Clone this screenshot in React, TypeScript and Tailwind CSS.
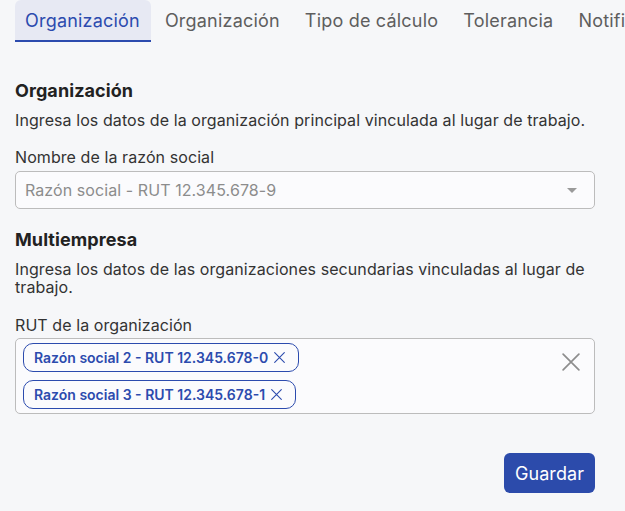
import { useState } from 'react';

type Chip = { id: string; label: string };

const TABS = ['Organización', 'Organización', 'Tipo de cálculo', 'Tolerancia', 'Notificaciones'];

function XIcon({ className }: { className?: string }) {
  return (
    <svg viewBox="0 0 16 16" className={className} fill="none" stroke="currentColor" strokeLinecap="round">
      <path d="M1 1l14 14M15 1L1 15" />
    </svg>
  );
}

export default function App() {
  const [active, setActive] = useState(0);
  const [chips, setChips] = useState<Chip[]>([
    { id: '2', label: 'Razón social 2 - RUT 12.345.678-0' },
    { id: '3', label: 'Razón social 3 - RUT 12.345.678-1' },
  ]);

  return (
    <main className="min-h-screen w-[625px] overflow-hidden bg-[#f6f7f9] font-['Inter',sans-serif] text-[#333]">
      <nav className="flex h-[42px] gap-1 overflow-hidden whitespace-nowrap pl-[15px]">
        {TABS.map((t, i) => (
          <button
            key={i}
            onClick={() => setActive(i)}
            className={
              i === active
                ? 'h-[42px] shrink-0 rounded-t-[6px] border-b-2 border-[#2c4bae] bg-[#e7e9f3] pl-[10px] pr-[11px] pt-[1px] text-[18px] leading-[22px] tracking-[0.2px] text-[#2c4bae]'
                : 'h-[42px] shrink-0 border-b-2 border-transparent pl-[10px] pr-[11px] pt-[1px] text-[18px] leading-[22px] tracking-[0.2px] text-[#5e5e5e]'
            }
          >
            {t}
          </button>
        ))}
      </nav>

      <section className="w-[595px] pl-[15px] tracking-[0.08px]">
        <h2 className="mt-[38px] text-[18px] font-bold leading-[22px] text-[#222]">Organización</h2>
        <p className="mt-[9px] text-[16px] leading-[18px]">
          Ingresa los datos de la organización principal vinculada al lugar de trabajo.
        </p>
        <label className="mt-[18px] block text-[16px] leading-[20px]">Nombre de la razón social</label>
        <div className="mt-1 flex h-[38px] items-center justify-between rounded-[5px] border border-[#bcbcbc] bg-[#fbfbfd] pl-[9px] pr-[17px]">
          <span className="text-[16px] leading-[20px] text-[#8c8c8c]">Razón social - RUT 12.345.678-9</span>
          <svg viewBox="0 0 10 5" className="h-[5px] w-[10px] text-[#9a9a9a]" fill="currentColor">
            <path d="M0 0h10L5 5z" />
          </svg>
        </div>

        <h2 className="mt-[20px] text-[18px] font-bold leading-[22px] text-[#222]">Multiempresa</h2>
        <p className="mt-[9px] text-[16px] leading-[18px]">
          Ingresa los datos de las organizaciones secundarias vinculadas al lugar de trabajo.
        </p>
        <label className="mt-[19px] block text-[16px] leading-[20px]">RUT de la organización</label>
        <div className="mt-[3px] flex min-h-[76px] justify-between rounded-[5px] border border-[#bcbcbc] bg-[#fbfbfd] pb-[4px] pl-[7px] pr-[14px] pt-[4px]">
          <div className="flex flex-col items-start gap-2">
            {chips.map((c) => (
              <span
                key={c.id}
                className="flex h-[29px] items-center gap-[6px] rounded-[10px] border border-[#2c4bae] bg-[#fbfbfd] pl-[10px] pr-[13px] text-[14px] font-semibold tracking-normal text-[#2c4bae]"
              >
                {c.label}
                <button onClick={() => setChips(chips.filter((x) => x.id !== c.id))}>
                  <XIcon className="h-[11px] w-[11px] stroke-[1.6]" />
                </button>
              </span>
            ))}
          </div>
          <button onClick={() => setChips([])} className="mt-[10px] self-start text-[#8d8d8d]">
            <XIcon className="h-[18px] w-[18px] stroke-[1.5]" />
          </button>
        </div>

        <div className="mt-[39px] flex justify-end">
          <button className="h-[40px] w-[91px] rounded-[6px] bg-[#2c4bab] text-[18px] text-white">Guardar</button>
        </div>
      </section>
    </main>
  );
}
